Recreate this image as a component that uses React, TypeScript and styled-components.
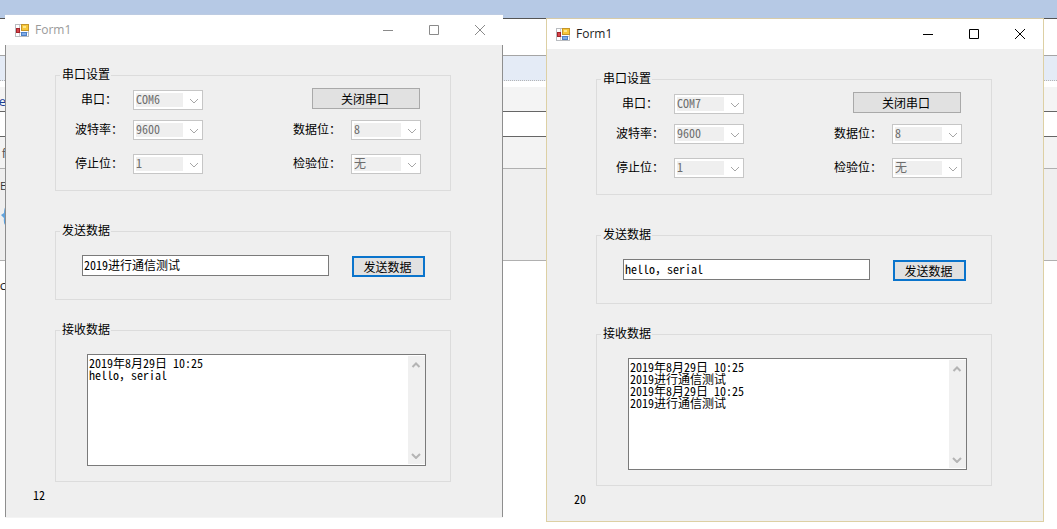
import React, { useId } from 'react';
import styled, { createGlobalStyle } from 'styled-components';

const GlobalStyle = createGlobalStyle`
  * { box-sizing: border-box; }
  body {
    margin: 0;
    background: #fff;
    color: #000;
    font: 12px/14px SimSun, "Noto Sans Mono CJK SC", "Liberation Serif", "Noto Sans CJK SC", serif;
  }
  button, input, select, textarea { font: inherit; color: inherit; margin: 0; border-radius: 0; }
`;

const Desktop = styled.main`
  position: relative;
  min-height: 100vh;
  overflow: hidden;
`;

const Band = styled.div<{ $h: number; $bg: string; $line?: string; $dotted?: boolean }>`
  height: ${p => p.$h}px;
  background: ${p => p.$bg};
  border-bottom: ${p => (p.$line ? `1px ${p.$dotted ? 'dotted' : 'solid'} ${p.$line}` : '0')};
`;

const Peek = styled.div<{ $color: string; $size: number; $top: number }>`
  display: flex;
  justify-content: flex-end;
  width: 6px;
  padding-top: ${p => p.$top}px;
  color: ${p => p.$color};
  font: ${p => p.$size}px/16px "Open Sans", sans-serif;
`;

const Frame = styled.section<{ $x: number; $y: number; $active: boolean }>`
  position: absolute;
  left: ${p => p.$x}px;
  top: ${p => p.$y}px;
  width: 498px;
  background: #efefef;
  border: 1px solid ${p => (p.$active ? '#ddd0a4' : '#f4f4f4')};
  border-top-color: ${p => (p.$active ? '#d8cba8' : '#bccbe2')};
  border-width: 1px ${p => (p.$active ? 1 : 0)}px;
`;

const TitleBar = styled.header<{ $active: boolean }>`
  display: flex;
  align-items: center;
  height: 30px;
  padding-left: ${p => (p.$active ? 9 : 10)}px;
  background: #fff;
  color: ${p => (p.$active ? '#222' : '#9a9a9a')};
`;

const Title = styled.h1`
  flex: 1;
  margin: 0;
  padding-left: 5px;
  font: 12px/16px "Segoe UI", "Open Sans", sans-serif;
`;

const CaptionButton = styled.button<{ $active: boolean }>`
  display: flex;
  align-items: center;
  justify-content: center;
  width: 46px;
  height: 30px;
  padding: 0;
  border: 0;
  background: none;
  color: ${p => (p.$active ? '#000' : '#8a8a8a')};
`;

const Client = styled.form<{ $active: boolean }>`
  height: 472px;
  padding: 22px 51px 0 ${p => (p.$active ? 49 : 49)}px;
  border: solid #8e8e8e;
  border-width: 0 ${p => (p.$active ? 0 : 1)}px;
`;

const Group = styled.fieldset<{ $h: number; $gap: number }>`
  height: ${p => p.$h}px;
  min-width: 0;
  margin: 0 0 ${p => p.$gap}px;
  padding: 0;
  border: 1px solid #dcdcdc;
`;

const Legend = styled.legend`
  margin-left: 4px;
  padding: 0 1px 2px 2px;
  line-height: 14px;
`;

const Settings = styled.div`
  display: grid;
  grid-template-columns: 48px 70px 1fr 48px 70px;
  grid-template-rows: 22px 30px 34px;
  column-gap: 10px;
  align-items: end;
  padding: 5px 29px 0 19px;
`;

const FieldLabel = styled.label<{ $col: number }>`
  grid-column: ${p => p.$col};
  height: 20px;
  line-height: 18px;
  text-align: center;
  white-space: nowrap;
`;

const Combo = styled.div`
  position: relative;
  height: 20px;
  svg { position: absolute; right: 4px; top: 8px; pointer-events: none; }
`;

const Select = styled.select`
  display: block;
  appearance: none;
  width: 100%;
  height: 20px;
  padding: 0 0 2px 2px;
  border: 1px solid #c6c6c6;
  background: linear-gradient(#efefef, #efefef) 2px 2px / 47px 14px no-repeat #fff;
  color: #6d6d6d;
  opacity: 1;
`;

const PushButton = styled.button<{ $primary?: boolean }>`
  height: 21px;
  padding: 0 2px 0 0;
  border: ${p => (p.$primary ? '2px solid #0a74cc' : '1px solid #a9a9a9')};
  background: #e1e1e1;
  line-height: 14px;
`;

const PortButton = styled(PushButton)`
  grid-column: 4 / 6;
  align-self: start;
  justify-self: end;
  width: 108px;
  margin-right: 1px;
`;

const SendButton = styled(PushButton)`
  width: 73px;
  margin-top: 1px;
`;

const SendRow = styled.div`
  display: flex;
  gap: 23px;
  padding: 16px 25px 0 26px;
`;

const TextBox = styled.input`
  flex: 1;
  min-width: 0;
  height: 21px;
  padding: 0 1px 2px;
  border: 1px solid #7a7a7a;
  background: #fff;
  outline: 0;
`;

const Receive = styled.div`
  display: flex;
  height: 112px;
  margin: 16px 24px 0 31px;
  border: 1px solid #7a7a7a;
  background: #fff;
`;

const Log = styled.textarea`
  flex: 1;
  min-width: 0;
  padding: 2px 1px;
  border: 0;
  background: #fff;
  line-height: 12px;
  resize: none;
  outline: 0;
  overflow: hidden;
`;

const ScrollBar = styled.div`
  display: flex;
  flex-direction: column;
  justify-content: space-between;
  width: 17px;
  margin: 1px 0;
  background: #f0f0f0;
`;

const ScrollButton = styled.button`
  display: flex;
  align-items: center;
  justify-content: center;
  height: 17px;
  padding: 0 2px 0 0;
  border: 0;
  background: none;
`;

const Counter = styled.output`
  display: block;
  margin: 6px 0 0 -22px;
`;

function Chevron({ up = false, color = '#b4b4b4', weight = 1 }) {
  return (
    <svg width="10" height="6" viewBox="0 0 10 6" fill="none" stroke={color} strokeWidth={weight}>
      <path d={up ? 'M1.5 5 5 1.5 8.5 5' : 'M1 1 5 5 9 1'} />
    </svg>
  );
}

function FormIcon() {
  return (
    <svg width="15" height="15" viewBox="0 0 15 15" aria-hidden="true">
      <rect x=".5" y="1.5" width="13" height="12" fill="#fff" stroke="#b9bcc0" />
      <path d="M4.5 2v11M1 9.5h12" stroke="#c9ccd0" />
      <rect x="1.5" y="5.5" width="3" height="4" fill="#d8434a" stroke="#a3242a" />
      <rect x="6.5" y="1.5" width="7" height="6" fill="#f7c738" stroke="#c4952a" />
      <rect x="8" y="3" width="3" height="2" fill="#fde68a" />
      <rect x="6.5" y="9.5" width="5" height="3" fill="#7fabe6" stroke="#4d80c6" />
    </svg>
  );
}

function Field({ label, value, col }: { label: string; value: string; col: number }) {
  const id = useId();
  return (
    <>
      <FieldLabel htmlFor={id} $col={col}>{label}</FieldLabel>
      <Combo>
        <Select id={id} disabled defaultValue={value}>
          <option>{value}</option>
        </Select>
        <Chevron color="#a6a6a6" />
      </Combo>
    </>
  );
}

interface WindowProps {
  x: number;
  y: number;
  active: boolean;
  port: string;
  message: string;
  log: string;
  count: number;
}

function SerialWindow({ x, y, active, port, message, log, count }: WindowProps) {
  return (
    <Frame $x={x} $y={y} $active={active}>
      <TitleBar $active={active}>
        <FormIcon />
        <Title>Form1</Title>
        <CaptionButton $active={active} aria-label="最小化">
          <svg width="11" height="11" stroke="currentColor"><path d="M0 5.5h10" /></svg>
        </CaptionButton>
        <CaptionButton $active={active} aria-label="最大化">
          <svg width="11" height="11" fill="none" stroke="currentColor"><path d="M.5.5h9v9h-9z" /></svg>
        </CaptionButton>
        <CaptionButton $active={active} aria-label="关闭">
          <svg width="11" height="11" stroke="currentColor"><path d="M0 0l10 10M10 0l-10 10" /></svg>
        </CaptionButton>
      </TitleBar>
      <Client $active={active} onSubmit={e => e.preventDefault()}>
        <Group $h={124} $gap={32}>
          <Legend>串口设置</Legend>
          <Settings>
            <Field label="串口：" value={port} col={1} />
            <PortButton type="button">关闭串口</PortButton>
            <Field label="波特率：" value="9600" col={1} />
            <Field label="数据位：" value="8" col={4} />
            <Field label="停止位：" value="1" col={1} />
            <Field label="检验位：" value="无" col={4} />
          </Settings>
        </Group>
        <Group $h={77} $gap={22}>
          <Legend>发送数据</Legend>
          <SendRow>
            <TextBox aria-label="发送数据" defaultValue={message} />
            <SendButton $primary>发送数据</SendButton>
          </SendRow>
        </Group>
        <Group $h={160} $gap={0}>
          <Legend>接收数据</Legend>
          <Receive>
            <Log aria-label="接收数据" readOnly defaultValue={log} />
            <ScrollBar>
              <ScrollButton type="button" disabled aria-label="向上滚动">
                <Chevron up weight={2} />
              </ScrollButton>
              <ScrollButton type="button" disabled aria-label="向下滚动">
                <Chevron weight={2} />
              </ScrollButton>
            </ScrollBar>
          </Receive>
        </Group>
        <Counter>{count}</Counter>
      </Client>
    </Frame>
  );
}

export default function App() {
  return (
    <>
      <GlobalStyle />
      <Desktop>
        <Band $h={19} $bg="#b6c9e5" $line="#555" />
        <Band $h={37} $bg="#fff" $line="#a5a5a5" />
        <Band $h={25} $bg="#e4ebf6" $line="#b5b5b5" $dotted />
        <Band $h={6} $bg="#fff" />
        <Band $h={25} $bg="#f4f4f4" $line="#666">
          <Peek $color="#1c3f94" $size={13} $top={6}>e</Peek>
        </Band>
        <Band $h={25} $bg="#fff" $line="#666" />
        <Band $h={32} $bg="#f3f3f3" $line="#b0b0b0">
          <Peek $color="#555" $size={13} $top={8}>f</Peek>
        </Band>
        <Band $h={92} $bg="#efefef" $line="#b0b0b0">
          <Peek $color="#333" $size={11} $top={9}>E</Peek>
          <Peek $color="#5a9bd8" $size={13} $top={12}>
            <svg width="5" height="20" viewBox="0 0 5 20" fill="#62a3dc"><path d="M5 0v20Q2 17 3 12L0 9l3-2Q3 2 5 0Z" /></svg>
          </Peek>
        </Band>
        <Band $h={60} $bg="#fff">
          <Peek $color="#222" $size={13} $top={16}>c</Peek>
        </Band>
        <SerialWindow
          x={5}
          y={14}
          active={false}
          port="COM6"
          message="2019进行通信测试"
          log={'2019年8月29日 10:25\nhello，serial'}
          count={12}
        />
        <SerialWindow
          x={546}
          y={18}
          active
          port="COM7"
          message="hello，serial"
          log={'2019年8月29日 10:25\n2019进行通信测试\n2019年8月29日 10:25\n2019进行通信测试'}
          count={20}
        />
      </Desktop>
    </>
  );
}
